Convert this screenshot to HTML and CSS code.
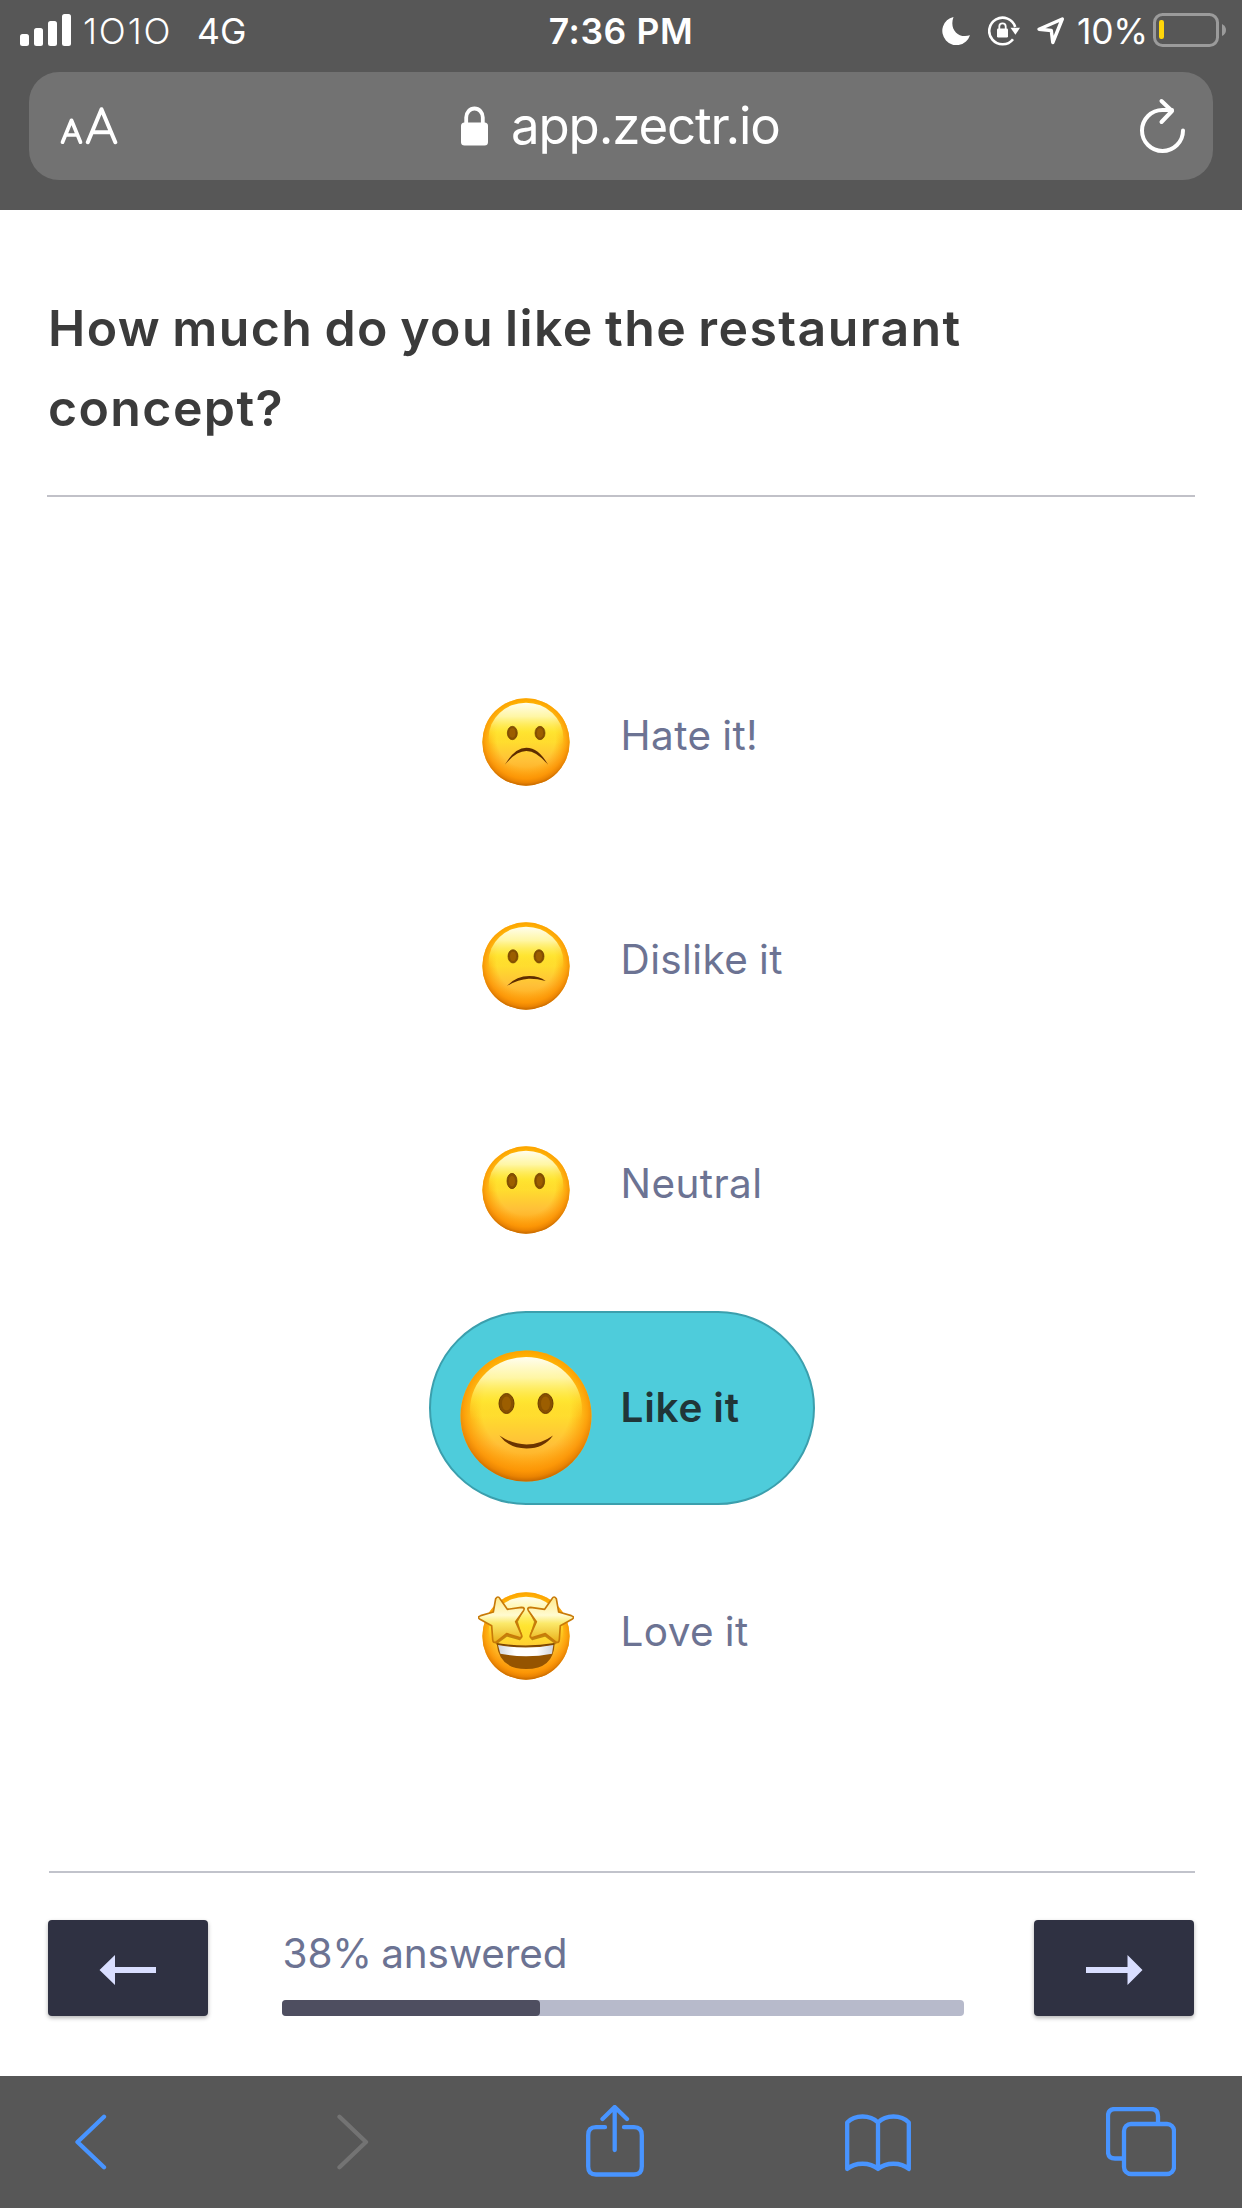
FILE: index.html
```html
<!DOCTYPE html>
<html lang="en">
<head>
<meta charset="utf-8">
<title>Restaurant concept survey</title>
<link rel="stylesheet" href="styles.css">
</head>
<body>
<svg class="defs" aria-hidden="true">
  <defs>
    <linearGradient id="base" x1="0" y1="0" x2="0" y2="1">
      <stop offset="0" stop-color="#ffc000"/><stop offset=".25" stop-color="#ffd01c"/><stop offset=".5" stop-color="#ffdc2e"/><stop offset=".72" stop-color="#ffc038"/><stop offset="1" stop-color="#ff9d08"/>
    </linearGradient>
    <radialGradient id="rim" cx=".5" cy=".45" r=".56">
      <stop offset=".6" stop-color="#ff9a00" stop-opacity="0"/><stop offset=".84" stop-color="#fb9000" stop-opacity=".75"/><stop offset=".92" stop-color="#e88000" stop-opacity=".9"/><stop offset="1" stop-color="#b85f00"/>
    </radialGradient>
    <linearGradient id="shine" x1="0" y1="0" x2="0" y2="1">
      <stop offset="0" stop-color="#fffef0"/><stop offset=".2" stop-color="#fffbb4" stop-opacity=".9"/><stop offset=".42" stop-color="#fff33c" stop-opacity=".5"/><stop offset=".6" stop-color="#ffdf30" stop-opacity="0"/>
    </linearGradient>
    <linearGradient id="star" x1="0" y1="0" x2="0" y2="1">
      <stop offset="0" stop-color="#ffe98a"/><stop offset=".4" stop-color="#fffbd0"/><stop offset=".58" stop-color="#fbe96a"/><stop offset="1" stop-color="#eab018"/>
    </linearGradient>
    <linearGradient id="teeth" x1="0" y1="0" x2="1" y2="0">
      <stop offset="0" stop-color="#cfd4dc"/><stop offset=".3" stop-color="#fff"/><stop offset=".7" stop-color="#fff"/><stop offset="1" stop-color="#cfd4dc"/>
    </linearGradient>
    <g id="face">
      <circle r="131" fill="url(#base)"/>
      <circle r="131" fill="url(#rim)"/>
      <ellipse cy="-13" rx="112" ry="105" fill="url(#shine)"/>
    </g>
    <g id="eye"><ellipse rx="15" ry="20" fill="#875000" stroke="#6b3b00" stroke-width="2"/><ellipse rx="9" ry="14" fill="#9c5e00"/></g>
    <path id="starshape" d="M-91 -112Q-84 -122 -78 -112L-56 -80L-14 -86Q-1 -86 -8 -75L-31 -43L-14 -5Q-10 7 -22 4L-58 -7L-88 17Q-99 24 -100 10L-103 -31L-138 -50Q-148 -57 -136 -61L-98 -72Z" fill="url(#star)" stroke="#c87a08" stroke-width="5" stroke-linejoin="round"/>
  </defs>
</svg>

<header class="browser-top">
  <div class="status">
    <div class="status-left">
      <svg class="signal" width="51" height="32" viewBox="0 0 51 32" fill="#fff"><rect y="20" width="9" height="12" rx="2.5"/><rect x="14" y="14" width="9" height="18" rx="2.5"/><rect x="28" y="7" width="9" height="25" rx="2.5"/><rect x="42" width="9" height="32" rx="2.5"/></svg>
      <span class="carrier">1O1O</span>
      <span class="network">4G</span>
    </div>
    <span class="time">7:36 PM</span>
    <div class="status-right">
      <svg class="moon" width="28" height="28" viewBox="0 0 28 28"><path d="M11.5 0A14.2 14.2 0 1 0 28 18.3C16 22 7 12 11.5 0Z" fill="#fff"/></svg>
      <svg class="rotation" width="32" height="30" viewBox="0 0 32 30"><path d="M27.2 11A13.3 13.3 0 1 0 25 23.2" fill="none" stroke="#fff" stroke-width="2.6"/><path d="M22.5 11.8h9.5l-4.6 7Z" fill="#fff"/><rect x="9" y="12.5" width="11" height="9" rx="1.2" fill="#fff"/><path d="M11.3 13v-2.5a3.2 3.2 0 0 1 6.4 0V13" fill="none" stroke="#fff" stroke-width="1.8"/></svg>
      <svg class="locate" width="28" height="28" viewBox="0 0 28 28"><path d="M2 12.2L25.3 2L15.8 25.5L14.3 13.5Z" fill="none" stroke="#fff" stroke-width="3.4" stroke-linejoin="round"/></svg>
      <span class="percent">10%</span>
      <svg class="battery" width="73" height="34" viewBox="0 0 73 34"><rect x="1.5" y="1.5" width="63" height="31" rx="8" fill="none" stroke="#9b9b9b" stroke-width="3"/><rect x="6" y="7" width="5" height="19" rx="2.2" fill="#ffd60a"/><path d="M69 11q4 2 4 6t-4 6Z" fill="#9b9b9b"/></svg>
    </div>
  </div>
  <div class="address">
    <svg width="58" height="38" viewBox="0 0 58 38" fill="none" stroke="#fff" stroke-linecap="round" stroke-linejoin="round"><path d="M2.500 35.200L11.500 13.300L20.500 35.200M5.500 28h12" stroke-width="3.7"/><path d="M27.800 35.200L41.500 2.200L55.300 35.200M32.500 25.300h18" stroke-width="4"/></svg>
    <div class="site">
      <svg width="28" height="40" viewBox="0 0 28 40"><rect y="16.5" width="27" height="23" rx="3.5" fill="#fff"/><path d="M5.200 18v-6.500a8.300 9 0 0 1 16.600 0V18" fill="none" stroke="#fff" stroke-width="3.8"/></svg>
      <span class="url">app.zectr.io</span>
    </div>
    <svg class="reload" width="46" height="56" viewBox="0 0 46 56" fill="none" stroke="#fff" stroke-width="4" stroke-linecap="round" stroke-linejoin="round"><path d="M43 32.500A20.500 20.500 0 1 1 22.500 12H32"/><path d="M21.500 3L32 13L21.500 24"/></svg>
  </div>
</header>

<main class="survey">
  <h1 class="question">How much do you like the restaurant concept?</h1>
  <div class="options">
    <div class="option"><svg class="emoji" viewBox="-144 -144 288 288"><use href="#face"/><use href="#eye" x="-41" y="-27"/><use href="#eye" x="42" y="-27"/><path d="M-63 68Q-34 17 1 17Q38 17 66 68Q32 27 1 27Q-30 27 -63 68Z" fill="#5e2c00"/></svg><span class="label">Hate it!</span></div>
    <div class="option"><svg class="emoji" viewBox="-144 -144 288 288"><use href="#face"/><use href="#eye" x="-39" y="-29"/><use href="#eye" x="39" y="-29"/><path d="M-57 60Q-30 30 10 30Q40 30 59 45Q30 37 8 38Q-25 40 -57 60Z" fill="#5e2c00"/></svg><span class="label">Dislike it</span></div>
    <div class="option"><svg class="emoji" viewBox="-144 -144 288 288"><use href="#face"/><g transform="translate(-42 -27) scale(1 1.15)"><use href="#eye"/></g><g transform="translate(41 -27) scale(1 1.15)"><use href="#eye"/></g></svg><span class="label">Neutral</span></div>
    <div class="option selected"><svg class="emoji" viewBox="-144 -144 288 288"><use href="#face"/><use href="#eye" x="-39" y="-25"/><use href="#eye" x="39" y="-25"/><path d="M-53 39Q-27 57 1 57Q29 57 54 39Q36 65 1 65Q-34 65 -53 39Z" fill="#6b3300"/></svg><span class="label">Like it</span></div>
    <div class="option love-row"><svg class="emoji" viewBox="-144 -144 288 288"><use href="#face"/><path d="M-88 23Q0 38 86 23Q82 99 0 99Q-80 99 -88 23Z" fill="#955400"/><path d="M-84 27Q0 42 82 27L78 53Q0 68 -77 53Z" fill="url(#teeth)"/><path d="M-88 23Q0 38 86 23" fill="none" stroke="#7b4300" stroke-width="4"/><path d="M-9 -82L-29 -43L-15 2L-20 8L-58 -3L-92 22M9 -82L29 -43L15 2L20 8L58 -3L92 22" fill="none" stroke="#a86000" stroke-width="9" stroke-linejoin="round" opacity=".7"/><use href="#starshape"/><use href="#starshape" transform="scale(-1 1)"/></svg><span class="label">Love it</span></div>
  </div>
  <footer class="progress-row">
    <button class="nav" aria-label="Previous"><svg width="58" height="30" viewBox="0 0 58 30"><path d="M.5 15L16 0v12h41v6H16v12Z" fill="#d9deff"/></svg></button>
    <div class="progress">
      <span class="answered">38% answered</span>
      <div class="track"><div class="fill"></div></div>
    </div>
    <button class="nav" aria-label="Next"><svg width="58" height="30" viewBox="0 0 58 30"><path d="M57.500 15L42.500 0v12H1v6h41.500v12Z" fill="#d9deff"/></svg></button>
  </footer>
</main>

<nav class="browser-bottom">
  <svg class="back" width="32" height="56" viewBox="0 0 32 56"><path d="M29 2.800L2.500 28L29 53.200"/></svg>
  <svg class="forward" width="32" height="56" viewBox="0 0 32 56"><path d="M2.500 2.800L29 28L2.500 53.200"/></svg>
  <svg class="share" width="58" height="72" viewBox="0 0 58 72"><path d="M19 22.200h-9q-7.800 0-7.800 8V61.500q0 8 7.800 8H48q7.800 0 7.800-8V30.200q0-8-7.800-8H38M28.700 3V45M16.500 14L28.700 2L41 14"/></svg>
  <svg class="book" width="66" height="58" viewBox="0 0 66 58"><path d="M33 55V8.500C25 .5 10 .5 2.200 8.500V55C10 48 25 48 33 55C41 48 56 48 63.800 55V8.500C56 .5 41 .5 33 8.500"/></svg>
  <svg class="tabs" width="70" height="70" viewBox="0 0 70 70"><path d="M52 16V9q0-7-7-7H9Q2 2 2 9V44.500q0 7 7 7h7"/><rect x="18" y="17" width="50" height="50" rx="7"/></svg>
</nav>
</body>
</html>
```
FILE: styles.css
```css
* { box-sizing: border-box; }
body {
  margin: 0;
  width: 1242px;
  height: 2208px;
  display: flex;
  flex-direction: column;
  background: #fff;
  font-family: Inter, "Liberation Sans", sans-serif;
}
svg { display: block; flex: none; }
.defs { position: absolute; width: 0; height: 0; }

.browser-top { height: 210px; background: #575757; color: #fff; padding: 0 29px; }
.status {
  height: 72px;
  margin: 0 -13px 0 -9px;
  padding-top: 13px;
  display: grid;
  grid-template-columns: 1fr auto 1fr;
  font-size: 35.5px;
  line-height: 38px;
  white-space: nowrap;
}
.status-left, .status-right { display: flex; align-items: flex-start; }
.status-right { justify-content: flex-end; }
.signal { margin-top: 1px; }
.carrier { margin-left: 12px; width: 114px; font-weight: 300; letter-spacing: 1.9px; }
.time { margin-left: -4px; font-weight: 600; letter-spacing: .6px; }
.moon { margin: 4px 18px 0 0; }
.rotation { margin: 3px 17px 0 0; }
.locate { margin: 4px 12px 0 0; }
.percent { width: 76px; letter-spacing: -.3px; }

.address {
  height: 108px;
  border-radius: 30px;
  background: #727272;
  padding: 0 27px 0 31px;
  display: flex;
  align-items: center;
}
.site { display: flex; align-items: center; margin: 0 auto 0 343px; }
.url { margin-left: 22px; font-size: 51px; line-height: 60px; letter-spacing: -1.15px; }

.survey { height: 1866px; padding: 0 47px; }
.question {
  margin: 0;
  height: 287px;
  padding: 78px 180px 0 1px;
  border-bottom: 2px solid #c1c1c8;
  color: #3b3b3b;
  font-size: 50px;
  line-height: 80px;
  font-weight: 600;
  letter-spacing: 1.4px;
  word-spacing: -2.8px;
}
.options { height: 1374px; padding-top: 142px; }
.option {
  width: 386px;
  height: 194px;
  margin: 0 0 30px 382px;
  display: flex;
  align-items: center;
  border-radius: 97px;
  color: #6c7393;
}
.option .emoji { width: 96px; height: 96px; margin: 12px 0 0 49px; }
.label { margin-left: 46.5px; font-size: 40.5px; line-height: 60px; letter-spacing: .4px; word-spacing: -1px; white-space: nowrap; }
.selected { background: #4eccdb; border: 2px solid #3b9fad; color: #203538; font-weight: 600; }
.selected .emoji { width: 144px; height: 144px; margin: 16px 0 0 23px; }
.selected .label { margin-left: 22.5px; letter-spacing: .8px; }
.love-row .emoji { margin-top: 8px; }

.progress-row {
  height: 205px;
  margin-left: 2px;
  border-top: 2px solid #c1c3cb;
  padding: 47px 1px 0 0;
  display: flex;
  align-items: flex-start;
  justify-content: space-between;
}
.nav {
  width: 160px;
  height: 96px;
  margin-left: -1px;
  padding: 3px 0 0;
  border: 0;
  border-radius: 4px;
  background: #2f3142;
  box-shadow: 0 2px 4px rgba(0, 0, 0, .3);
  display: flex;
  align-items: center;
  justify-content: center;
}
.progress { width: 682px; margin-right: -2px; height: 96px; }
.answered { display: block; height: 80px; padding: 4px 0 0 1px; line-height: 60px; font-size: 40.5px; letter-spacing: -.1px; word-spacing: -2.2px; color: #6c7393; }
.track { height: 16px; border-radius: 4px; background: #b7bacb; }
.fill { width: 258px; height: 16px; border-radius: 4px; background: #4e4e60; }

.browser-bottom {
  height: 132px;
  padding: 0 66px 1px 75px;
  background: #575757;
  display: flex;
  align-items: center;
  fill: none;
  stroke: #4894ff;
  stroke-width: 4.3;
  stroke-linecap: round;
  stroke-linejoin: round;
}
.forward { margin-left: 230px; stroke: #737373; }
.share { margin: 0 0 2px 217px; }
.book { margin: 2px 0 0 201px; }
.tabs { margin-left: 195px; }
```
